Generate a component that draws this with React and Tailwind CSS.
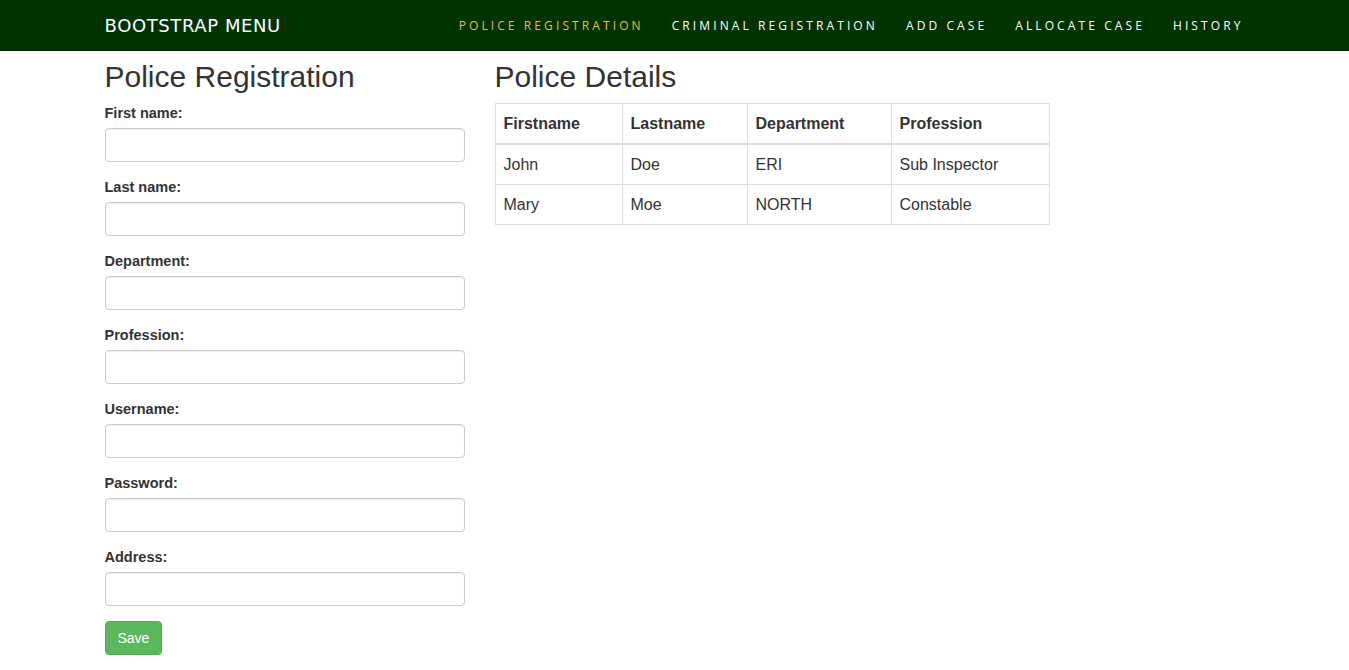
import React from "react";

const fields = [
  "First name:",
  "Last name:",
  "Department:",
  "Profession:",
  "Username:",
  "Password:",
  "Address:",
];

const rows = [
  ["John", "Doe", "ERI", "Sub Inspector"],
  ["Mary", "Moe", "NORTH", "Constable"],
];

const links = [
  { label: "POLICE REGISTRATION", active: true },
  { label: "CRIMINAL REGISTRATION" },
  { label: "ADD CASE" },
  { label: "ALLOCATE CASE" },
  { label: "HISTORY" },
];

function App() {
  return (
    <div className="min-h-screen bg-white text-[#333] font-['Liberation_Sans',Arial,sans-serif]">
      <nav className="h-[51px] bg-[#003300]">
        <div className="w-[1140px] mx-auto h-full flex items-center justify-between">
          <a className="text-white text-[18px] tracking-[0.6px] font-['DejaVu_Sans',sans-serif] leading-[20px]">
            BOOTSTRAP MENU
          </a>
          <ul className="flex -mr-[13px]">
            {links.map((l) => (
              <li key={l.label}>
                <a
                  className={
                    "block px-[14px] text-[12px] tracking-[3.1px] leading-[51px] font-['Open_Sans',sans-serif] " +
                    (l.active ? "text-[#f0bf1f]" : "text-white")
                  }
                >
                  {l.label}
                </a>
              </li>
            ))}
          </ul>
        </div>
      </nav>

      <div className="w-[1140px] mx-auto flex gap-[30px]">
        <div className="w-[360px]">
          <h2 className="mt-[9px] mb-[10px] text-[30px] leading-[33px]">
            Police Registration
          </h2>
          <form>
            {fields.map((f) => (
              <div key={f} className="mb-[15px]">
                <label className="block mb-[5px] text-[14.5px] leading-[20px] font-bold">
                  {f}
                </label>
                <input
                  type={f === "Password:" ? "password" : "text"}
                  className="block w-full h-[34px] px-3 rounded-[4px] border border-[#ccc] shadow-[inset_0_1px_1px_rgba(0,0,0,0.075)] text-[14px]"
                />
              </div>
            ))}
            <button
              type="button"
              className="h-[34px] px-3 rounded-[4px] bg-[#5cb85c] border border-[#4cae4c] text-white text-[14px] leading-[20px]"
            >
              Save
            </button>
          </form>
        </div>

        <div className="w-[555px]">
          <h2 className="mt-[9px] mb-[10px] text-[30px] leading-[33px]">
            Police Details
          </h2>
          <table className="w-full border-collapse border border-[#ddd] text-[16px] leading-[23px]">
            <thead>
              <tr>
                <th className="w-[127px] text-left font-bold p-[8px] border border-[#ddd] border-b-2">
                  Firstname
                </th>
                <th className="w-[125px] text-left font-bold p-[8px] border border-[#ddd] border-b-2">
                  Lastname
                </th>
                <th className="w-[144px] text-left font-bold p-[8px] border border-[#ddd] border-b-2">
                  Department
                </th>
                <th className="text-left font-bold p-[8px] border border-[#ddd] border-b-2">
                  Profession
                </th>
              </tr>
            </thead>
            <tbody>
              {rows.map((r) => (
                <tr key={r[0]}>
                  {r.map((c) => (
                    <td key={c} className="p-[8px] border border-[#ddd]">
                      {c}
                    </td>
                  ))}
                </tr>
              ))}
            </tbody>
          </table>
        </div>
      </div>
    </div>
  );
}

export default App;
